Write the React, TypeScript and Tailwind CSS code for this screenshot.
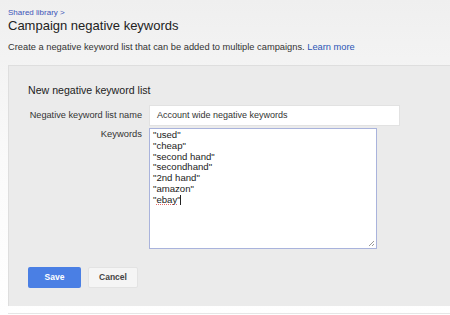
import React from "react";

export default function App() {
  const kws = ['"used"', '"cheap"', '"second hand"', '"secondhand"', '"2nd hand"', '"amazon"'];
  return (
    <div
      className="w-[450px] h-[315px] overflow-hidden bg-gradient-to-b from-[#efefef] via-[#fafafa] to-white relative"
      style={{ fontFamily: '"Liberation Sans", Arial, sans-serif' }}
    >
      <div className="pl-2 pt-[8px]">
        <div className="text-[8px] leading-[10px] text-[#3d55b8]">Shared library &gt;</div>
        <div className="text-[13px] leading-[17px] text-[#222] -mt-[1px]">Campaign negative keywords</div>
        <div className="text-[9.3px] leading-[12px] text-[#333] mt-[7px]">
          Create a negative keyword list that can be added to multiple campaigns.{" "}
          <span className="text-[#2a55b5]">Learn more</span>
        </div>
      </div>
      <div className="ml-2 mt-[12px] h-[241px] bg-[#ebebeb] border-t border-l border-[#dedede] pl-[19px] pt-[17px]">
        <div className="text-[10.6px] leading-[14px] text-[#222]">New negative keyword list</div>
        <div className="mt-[8px] grid grid-cols-[114px_1fr] gap-x-[7px] gap-y-[2px] items-start">
          <div className="text-[9.2px] leading-[21px] text-[#333] text-right whitespace-nowrap">Negative keyword list name</div>
          <div className="w-[251px] h-[21px] bg-white border border-[#e2e2e2] text-[9px] leading-[19px] text-[#333] pl-[7px] whitespace-nowrap">
            Account wide negative keywords
          </div>
          <div className="text-[9.4px] leading-[12px] text-[#333] text-right">Keywords</div>
          <div className="relative w-[228px] h-[121px] bg-white border border-[#a9b3dc] pl-[3px] pt-[1px] text-[9.6px] leading-[10.8px] text-[#222]">
            {kws.map((k) => (
              <div key={k}>{k}</div>
            ))}
            <div>
              "<span className="underline decoration-dotted decoration-[#e06b6b]">ebay</span>"
              <span className="inline-block w-px h-[10px] bg-[#222] align-middle -ml-[1px]"></span>
            </div>
            <svg className="absolute right-[1px] bottom-[1px]" width="7" height="7" viewBox="0 0 7 7">
              <path d="M6 1L1 6M6 4L4 6" stroke="#999" strokeWidth="1" />
            </svg>
          </div>
        </div>
        <div className="mt-[18px] flex gap-[7px]">
          <div className="w-[53px] h-[21px] bg-[#4a7fe4] rounded-[2px] text-white font-bold text-[8.5px] leading-[21px] text-center">
            Save
          </div>
          <div className="w-[50px] h-[21px] bg-[#f5f5f5] border border-[#e3e3e3] rounded-[2px] text-[#444] font-bold text-[8.5px] leading-[19px] text-center">
            Cancel
          </div>
        </div>
      </div>
      <div className="ml-2 mt-[7px] h-px bg-[#e6e6e6]"></div>
    </div>
  );
}
